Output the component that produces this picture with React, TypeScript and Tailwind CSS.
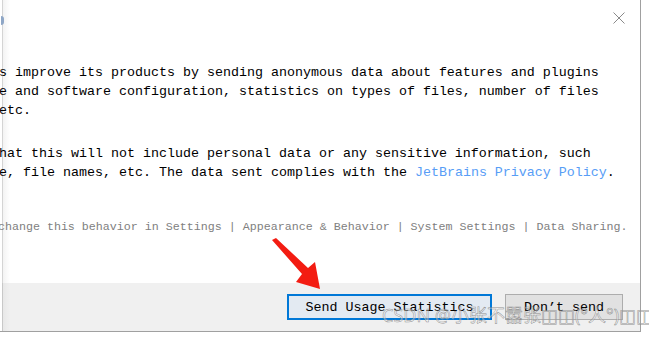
const mono = "font-['Liberation_Mono','DejaVu_Sans_Mono',monospace]";

function CloseIcon() {
  return (
    <svg width="12" height="12" viewBox="0 0 12 12" className="block">
      <path d="M0.5 0.5 L11.5 11.5 M11.5 0.5 L0.5 11.5" stroke="#8a8a8a" strokeWidth="1" fill="none" />
    </svg>
  );
}

function Arrow() {
  return (
    <svg width="649" height="340" className="pointer-events-none absolute left-0 top-0">
      <polygon points="272,240 276,238 308,268 315,262 320,289 296,282 302,274" fill="#f31c12" />
    </svg>
  );
}

export default function App() {
  return (
    <div className="relative flex h-[340px] w-[649px] overflow-hidden bg-white">
      {/* dialog panel, left part is cut off by the crop */}
      <div className="flex h-[332px] w-[641px] flex-col border-b border-r border-[#a0a0a0]">
        <div className="flex flex-1 flex-col overflow-hidden bg-[linear-gradient(to_right,#ffffff_2px,#d4d4d4_2px,#d4d4d4_3px,#f3f3f3_3px,#ffffff_10px)]">
          <div className="flex h-[36px] items-start justify-between">
            <div className="ml-[1px] mt-[16px] h-[9px] w-[3px] rounded-r-sm bg-[#8ea6c6]" />
            <div className="mr-[15px] mt-[12px]">
              <CloseIcon />
            </div>
          </div>
          <div className={`ml-[-105px] pt-[27px] text-[13.33px] leading-[19px] text-black ${mono}`}>
            <p className="whitespace-pre">Help JetBrains improve its products by sending anonymous data about features and plugins</p>
            <p className="whitespace-pre">used, hardware and software configuration, statistics on types of files, number of files</p>
            <p className="whitespace-pre">per project, etc.</p>
            <p className="mt-[24px] whitespace-pre">Please note that this will not include personal data or any sensitive information, such</p>
            <p className="whitespace-pre">
              as source code, file names, etc. The data sent complies with the{' '}
              <span className="text-[#589df6]">JetBrains Privacy Policy</span>.
            </p>
            <p className="ml-[-2px] mt-[37px] whitespace-pre text-[11.67px] leading-[16px] text-[#808080]">
              You can always change this behavior in Settings | Appearance &amp; Behavior | System Settings | Data Sharing.
            </p>
          </div>
        </div>
        <div className="flex h-[48px] items-center justify-end gap-[13px] bg-[#f0f0f0] pr-[17px] bg-[linear-gradient(to_right,#ffffff_2px,#c8c8c8_2px,#c8c8c8_3px,#e8e8e8_3px,#f0f0f0_10px)]">
          <button className={`flex h-[26px] w-[205px] items-center justify-center border-2 border-[#0078d7] bg-[#e3eaf2] pt-[2px] text-[13.33px] text-black ${mono}`}>
            Send Usage Statistics
          </button>
          <button className={`flex h-[26px] w-[118px] items-center justify-center border border-[#adadad] bg-[#e1e1e1] pt-[2px] text-[13.33px] text-black ${mono}`}>
            Don’t send
          </button>
        </div>
      </div>
      <div className="flex-1 bg-white" />

      <Arrow />
      {/* CSDN watermark */}
      <div className="pointer-events-none absolute left-[382px] top-[303px] whitespace-nowrap font-['Noto_Sans','Noto_Sans_CJK_SC',sans-serif] text-[18px] leading-[24px] text-[rgba(255,255,255,0.4)] [-webkit-text-stroke:0.5px_rgba(125,125,125,0.85)]">
        CSDN @小张不嚣张◫◫(°人°)◫◫
      </div>
    </div>
  );
}
